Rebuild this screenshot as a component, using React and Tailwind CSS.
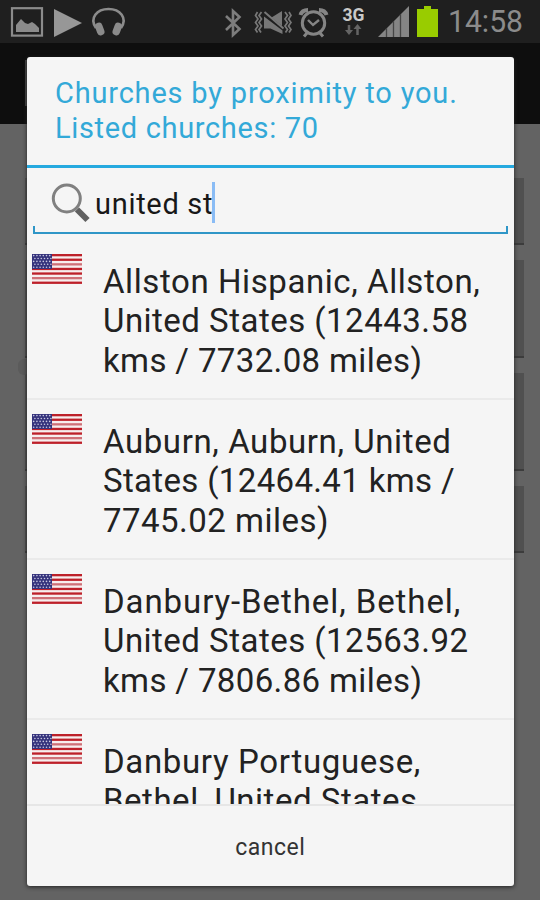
const churches = [
  { lines: ["Allston Hispanic, Allston,", "United States (12443.58", "kms / 7732.08 miles)"], tracks: ["tracking-[0.58px]", "tracking-[0.48px]", "tracking-[0.37px]"] },
  { lines: ["Auburn, Auburn, United", "States (12464.41 kms /", "7745.02 miles)"], tracks: ["tracking-[0.6px]", "tracking-[0.34px]", "tracking-[0.48px]"] },
  { lines: ["Danbury-Bethel, Bethel,", "United States (12563.92", "kms / 7806.86 miles)"], tracks: ["tracking-[0.92px]", "tracking-[0.48px]", "tracking-[0.37px]"] },
  { lines: ["Danbury Portuguese,", "Bethel, United States"], tracks: ["tracking-[0.66px]", "tracking-[0.52px]"] },
];

function Flag() {
  return (
    <svg className="h-[30px] w-[50px] shrink-0" viewBox="0 0 50 30">
      <rect width="50" height="30" fill="#f7eeee" />
      {[0, 1, 2, 3, 4, 5, 6].map((i) => (
        <rect key={i} y={i * 4.6} width="50" height="2.3" fill={i === 5 || i === 2 ? "#cf7178" : "#bd2029"} />
      ))}
      <rect width="20" height="15" fill="#35337c" />
      {[0, 1, 2, 3, 4].map((r) =>
        [0, 1, 2, 3, 4, 5].map((c) => (
          <circle key={`${r}-${c}`} cx={1.7 + c * 3.2 + (r % 2) * 1.2} cy={1.6 + r * 2.9} r="0.8" fill="#c9c8e0" />
        ))
      )}
    </svg>
  );
}

function StatusBar() {
  return (
    <header className="h-[43px] bg-[#1f1f1f]">
      <svg className="block h-[43px] w-[540px]" viewBox="0 0 540 43" fill="none" stroke="#8b8b8b">
        <rect x="12" y="8.2" width="30" height="27.4" strokeWidth="2.2" />
        <path d="M16 32V25l5-6 4 4 3 1 4-2 3 2 4 4v4z" fill="#8b8b8b" stroke="none" />
        <path d="M54 9v28l28-14z" fill="#979797" stroke="none" />
        <path d="M96 28C89 18 97 9 108.500 9S128 18 121 28" strokeWidth="2.600" />
        <rect x="96" y="22.500" width="7.500" height="13" rx="3.500" transform="rotate(-20 99.700 29)" fill="#8b8b8b" stroke="none" />
        <rect x="113.500" y="22.500" width="7.500" height="13" rx="3.500" transform="rotate(20 117.300 29)" fill="#8b8b8b" stroke="none" />
        <path d="M226 16l13.500 13-6.500 6V11l6.500 6L226 30" strokeWidth="2.600" stroke="#7d7d7d" />
        <g stroke="#777" strokeWidth="1.7">
          <path d="M261.500 12l-2.500 3.500 2.500 3.500-2.500 3.500 2.500 3.500-2.500 3.500 2 3M257.500 12l-2 3.500 2.500 3.500-2.500 3.500 2.500 3.500-2.500 3.500 2 3M285 12l2.500 3.500-2.500 3.500 2.500 3.500-2.500 3.500 2.500 3.500-2 3M289 12l2 3.500-2.500 3.500 2.500 3.500-2.500 3.500 2.500 3.500-2 3" />
          <path d="M264 16.500v12h6.500L282.500 34v-3.500zM271.500 17.500l10.500-6.500v15z" fill="#777" stroke="none" />
          <path d="M264.500 12l19 16.500" strokeWidth="2" />
        </g>
        <g stroke="#858585">
          <circle cx="313.500" cy="23" r="11.200" strokeWidth="3" />
          <path d="M308 20l5 5 6-5" strokeWidth="2.400" />
          <path d="M307 33l-3 3.500M320 33l3 3.500" strokeWidth="3" />
          <path d="M300.500 15q1.500-5 7.500-5M319 10q6 0 7.500 5" strokeWidth="4" />
        </g>
        <text x="342.500" y="20.800" fill="#c9c9c9" stroke="none" fontFamily="Roboto, sans-serif" fontWeight="700" fontSize="18" textLength="22" lengthAdjust="spacingAndGlyphs">3G</text>
        <path d="M349 25v8M357.500 35v-8" stroke="#646464" strokeWidth="2.500" />
        <path d="M345 30h8l-4 5zM353.500 29h8l-4-5z" fill="#646464" stroke="none" />
        <path d="M378 37l31-31v31z" fill="#858585" stroke="none" />
        <path d="M386.500 28v9M393.500 21v16M400.500 14v23" stroke="#454545" strokeWidth="1.300" />
        <path d="M417 9h7V6h7v3h7v28h-21z" fill="#99cc00" stroke="none" />
        <text x="448" y="32" fill="#8b8b8b" stroke="none" fontFamily="Roboto, sans-serif" fontWeight="400" fontSize="30.500" textLength="75" lengthAdjust="spacingAndGlyphs">14:58</text>
      </svg>
    </header>
  );
}

function Backdrop() {
  const panel = "ml-[25px] w-[499px] bg-[#505050] border-b-2 border-[#3c3c3c]";
  return (
    <>
      <StatusBar />
      <div className="h-[81px] bg-[#0e0e0e] pl-[25px] pt-[17px]">
        <div className="h-[46px] w-10 bg-[#444]" />
      </div>
      <div className="flex h-[776px] flex-col gap-[15px] bg-[#636363] pt-[54px]">
        <div className={`${panel} h-[67px]`} />
        <div className={`${panel} h-[98px]`} />
        <div className={`${panel} h-[98px]`} />
        <div className={`${panel} h-[67px]`} />
      </div>
    </>
  );
}

export default function App() {
  return (
    <div className="relative h-[900px] w-[540px] overflow-hidden font-['Roboto',sans-serif]">
      <Backdrop />
      <div className="absolute left-[18px] top-[359px] h-4 w-3 rounded-full bg-[#5b5b5b]" />
      <section className="absolute left-[27px] top-[57px] flex h-[829px] w-[486.500px] flex-col overflow-hidden rounded-[3px] bg-[#f5f5f5] shadow-[0_1px_4px_#222]">
        <h1 className="h-[108px] shrink-0 whitespace-nowrap pl-7 pt-[19px] text-[29px] leading-[35px] text-[#33a9d8]">
          <span className="block tracking-[0.81px]">Churches by proximity to you.</span>
          <span className="block tracking-[0.66px]">Listed churches: 70</span>
        </h1>
        <div className="h-[3px] shrink-0 bg-[#25a9df]" />
        <div className="mx-1.5 flex h-[66px] shrink-0 flex-col">
          <div className="flex h-[58px] items-center pl-[18px]">
            <svg className="mt-2.5 h-[42px] w-[40px] shrink-0" viewBox="0 0 40 42" fill="none">
              <circle cx="15.800" cy="17.500" r="13.500" stroke="#808080" strokeWidth="3" />
              <path d="M26 28.500l10.500 10.500" stroke="#606060" strokeWidth="6" />
            </svg>
            <span className="mt-3.5 pl-1 text-[29px] leading-9 tracking-[0.7px] text-[#181818]">united st</span>
            <span className="-ml-px mt-2.5 h-[41px] w-[3px] bg-[#8abcf5]" />
          </div>
          <div className="h-2 border-x-2 border-b-2 border-[#2f96c7]" />
        </div>
        <ul className="flex h-[570px] shrink-0 flex-col overflow-hidden pt-[6px]">
          {churches.map((church, i) => (
            <li key={i} className="flex h-[160px] shrink-0 border-b-2 border-[#eaeaea] pl-[5px] pt-[14px]">
              <Flag />
              <p className="whitespace-nowrap pl-[21px] pt-[7.500px] text-[33px] leading-[39.500px] text-[#222]">
                {church.lines.map((line, j) => (
                  <span key={line} className={`block ${church.tracks[j]}`}>{line}</span>
                ))}
              </p>
            </li>
          ))}
        </ul>
        <button className="flex-1 border-t-2 border-[#e6e6e6] pt-1 text-[23px] tracking-[0.5px] text-[#333]">cancel</button>
      </section>
    </div>
  );
}
